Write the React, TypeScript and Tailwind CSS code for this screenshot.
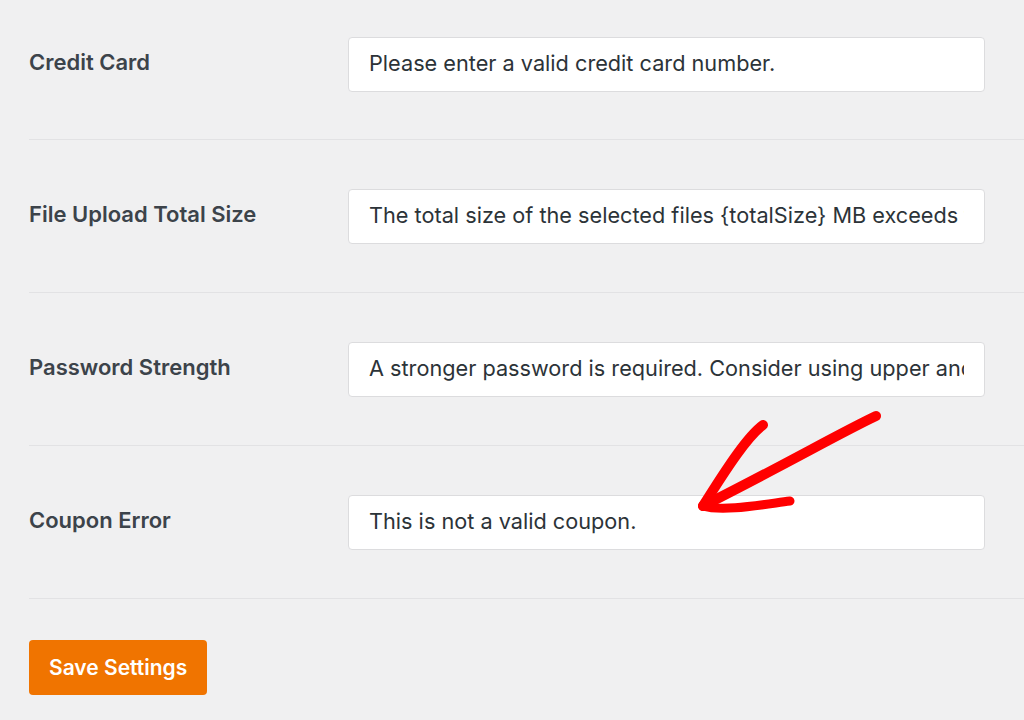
import React from "react"

const rows = [
  { label: "Credit Card", value: "Please enter a valid credit card number." },
  {
    label: "File Upload Total Size",
    value: "The total size of the selected files {totalSize} MB exceeds the allowed limit {maxSize} MB.",
  },
  {
    label: "Password Strength",
    value: "A stronger password is required. Consider using upper and lower case letters, numbers, and symbols.",
  },
  { label: "Coupon Error", value: "This is not a valid coupon." },
]

function Arrow() {
  return (
    <svg
      className="pointer-events-none absolute left-0 top-0"
      width="1024"
      height="720"
      viewBox="0 0 1024 720"
      fill="none"
    >
      <g stroke="#ff0000" strokeLinecap="round" strokeLinejoin="round">
        <path d="M876 416 C 840 433, 790 462, 703 506" strokeWidth="10" />
        <path d="M763 425 C 748 436, 728 466, 703 506" strokeWidth="10" />
        <path d="M703 506 C 722 512, 760 505, 790 501" strokeWidth="9" />
      </g>
    </svg>
  )
}

export default function App() {
  return (
    <div
      className="relative h-[720px] w-[1024px] overflow-hidden bg-[#f0f0f1] pl-[29px] pt-[37px]"
      style={{ fontFamily: "Inter, 'Noto Sans', sans-serif" }}
    >
      {rows.map((row, i) => (
        <div key={row.label}>
          <div className="flex h-[55px] items-center pr-[39px]">
            <div className="w-[319px] pb-[4px] text-[22px] font-semibold text-[#3c434a]">{row.label}</div>
            <input
              readOnly
              value={row.value}
              className="h-[55px] flex-1 rounded-[4px] border border-[#dcdcde] bg-white px-[20px] pb-[4px] text-[21.7px] text-[#2c3338] outline-none"
            />
          </div>
          <div className={i === 0 ? "mb-[49px] mt-[47px] h-px bg-[#e2e2e4]" : "mb-[49px] mt-[48px] h-px bg-[#e2e2e4]"} />
        </div>
      ))}
      <button className="-mt-[8px] h-[55px] rounded-[4px] bg-[#f07400] px-[20px] text-[21px] font-semibold text-white">
        Save Settings
      </button>
      <Arrow />
    </div>
  )
}
